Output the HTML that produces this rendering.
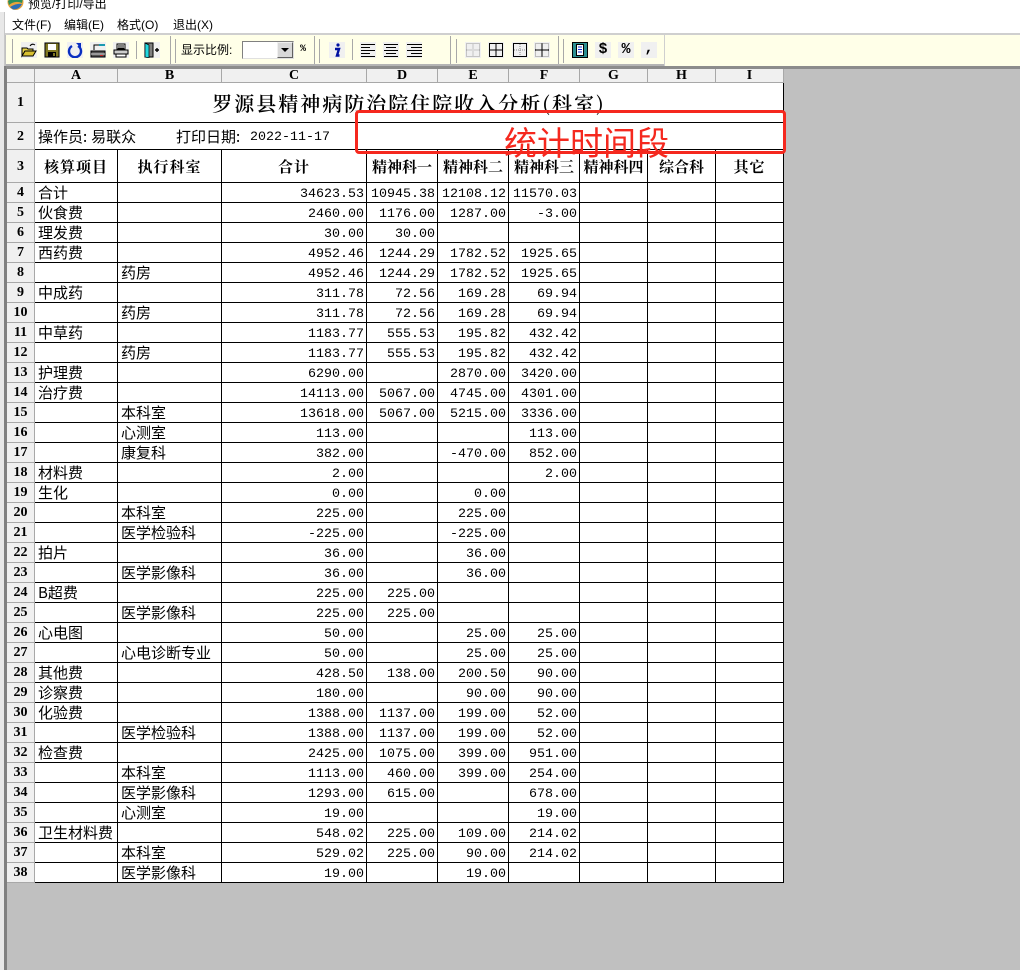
<!DOCTYPE html>
<html lang="zh"><head><meta charset="utf-8"><title>预览/打印/导出</title>
<style>
html,body{margin:0;padding:0;width:1020px;height:970px;overflow:hidden;background:#c0c0c0;position:relative;font-family:"Liberation Sans","WenQuanYi Zen Hei",sans-serif}
.a{position:absolute}
.top{left:0;top:0;width:1020px;height:33px;background:#fff}
.m{position:absolute;top:18px;font-size:12px;line-height:14px;color:#000;white-space:nowrap}
.tb{left:6px;top:35px;width:1014px;height:31px;background:#ffffe8}
.g{position:absolute;background:#a8a8a8;width:1px}
.i{position:absolute;top:42px;width:16px;height:16px;background:#f0f0f0}
.i svg{display:block}
table{position:absolute;left:7px;top:69px;width:777px;border-collapse:separate;border-spacing:0;table-layout:fixed;background:#fff;font-family:"WenQuanYi Zen Hei","Noto Sans CJK SC",sans-serif;font-size:15px;color:#000}
td{box-sizing:border-box;padding:0 0 0 3px;border-right:1px solid #000;border-bottom:1px solid #000;height:20px;line-height:19px;overflow:hidden;white-space:nowrap}
td.n{font-family:"Liberation Mono",monospace;font-size:13.33px;text-align:right;padding:4px 2px 0 0;line-height:15px}
td.r,td.c{background:#f0f0f0;font-family:"Liberation Serif","Noto Serif CJK SC",serif;font-weight:bold;text-align:center;padding:1px 0 0;line-height:18px;border-right:1px solid #a8a8a8;border-bottom:1px solid #a8a8a8;font-size:14px}
td.c{height:14px;line-height:13px;padding:0}
td.h{font-family:"Noto Serif CJK SC",serif;font-weight:bold;font-size:15px;text-align:center;padding:0;letter-spacing:1px}
.t2{position:absolute;top:129px;font-family:"WenQuanYi Zen Hei","Noto Sans CJK SC",sans-serif;font-size:15px;line-height:16px;white-space:nowrap}
</style></head>
<body>
<div class="a top"></div>
<div class="a" style="left:0;top:12px;width:4px;height:958px;background:#e8e8e8"></div>
<div class="a" style="left:4px;top:66px;width:3px;height:904px;background:#808080"></div>
<div class="a" style="left:4px;top:12px;width:1px;height:54px;background:#c8c8c8"></div>
<svg class="a" style="left:7px;top:-6px" width="17" height="16" viewBox="0 0 17 16"><circle cx="8.500" cy="8" r="8" fill="#e8a33c"/><path d="M1 7Q8 2 16 4L15 9Q8 6 2 11Z" fill="#2b8f5a"/><path d="M3 13Q10 9 15 10Q12 16 6 15.500Z" fill="#2d6fb5"/></svg>
<div class="a" style="left:28px;top:-3px;font-size:12px;line-height:14px;white-space:nowrap">预览/打印/导出</div>
<div class="m" style="left:12px">文件(F)</div>
<div class="m" style="left:64px">编辑(E)</div>
<div class="m" style="left:117px">格式(O)</div>
<div class="m" style="left:173px">退出(X)</div>

<div class="a" style="left:5px;top:33px;width:1015px;height:2px;background:#cfcfcf"></div>
<div class="a tb"></div>
<div class="a" style="left:6px;top:64px;width:658px;height:2px;background:#b4b4b4"></div>
<div class="a" style="left:6px;top:66px;width:1014px;height:3px;background:#8c8c8c"></div>
<div class="a" style="left:664px;top:35px;width:1px;height:31px;background:#cfcfcf"></div>

<div class="g" style="left:12px;top:39px;height:24px"></div>
<div class="g" style="left:136px;top:41px;height:18px"></div>
<div class="g" style="left:170px;top:36px;height:28px"></div>
<div class="g" style="left:175px;top:39px;height:24px"></div>
<div class="g" style="left:314px;top:36px;height:28px"></div>
<div class="g" style="left:319px;top:39px;height:24px"></div>
<div class="g" style="left:352px;top:39px;height:21px"></div>
<div class="g" style="left:450px;top:36px;height:28px"></div>
<div class="g" style="left:456px;top:39px;height:24px"></div>
<div class="g" style="left:558px;top:36px;height:28px"></div>
<div class="g" style="left:563px;top:39px;height:24px"></div>

<div class="i" style="left:21px"><svg width="16" height="16" viewBox="0 0 16 16"><path d="M1 6h5l1 1h5v2H4L1 14Z" fill="#e8d44a" stroke="#000"/><path d="M1 14L4 9h11l-3 5Z" fill="#d8c030" stroke="#000"/><path d="M9 4Q11 1 14 3" fill="none" stroke="#000"/></svg></div>
<div class="i" style="left:44px"><svg width="16" height="16" viewBox="0 0 16 16"><path d="M1 1h14v14H1Z" fill="#807820" stroke="#000"/><rect x="4" y="2" width="8" height="6" fill="#fff"/><rect x="4" y="10" width="8" height="5" fill="#000"/><rect x="9" y="11" width="2" height="3" fill="#807820"/></svg></div>
<div class="i" style="left:67px"><svg width="16" height="16" viewBox="0 0 16 16"><path d="M5 4A6 6 0 1 0 11 4" fill="none" stroke="#0a2fc0" stroke-width="2.400"/><path d="M9 1h5v5Z" fill="#0a2fc0"/></svg></div>
<div class="i" style="left:90px"><svg width="16" height="16" viewBox="0 0 16 16"><path d="M1 9h14v6H1Z" fill="#555" stroke="#000"/><path d="M1 12h14" stroke="#ddd"/><path d="M4 8V3h6" fill="none" stroke="#000"/><path d="M9 3h6" stroke="#1a9ab0" stroke-width="2"/><rect x="10" y="13" width="3" height="1" fill="#c22"/></svg></div>
<div class="i" style="left:113px"><svg width="16" height="16" viewBox="0 0 16 16"><path d="M4 2h8v5H4Z" fill="#fff" stroke="#000"/><path d="M1 8h14v4H1Z" fill="#ccc" stroke="#000"/><path d="M3 12h10v3H3Z" fill="#fff" stroke="#000"/><path d="M5 4h6M5 6h6" stroke="#000"/></svg></div>
<div class="i" style="left:144px"><svg width="16" height="16" viewBox="0 0 16 16"><path d="M1 1h8v14H1Z" fill="#808080" stroke="#000"/><path d="M1 1l4 2v13l-4-1Z" fill="#22d8e0" stroke="#000" stroke-width=".7"/><path d="M11 8h4M13 6v4" stroke="#000" stroke-width="1.400"/></svg></div>

<div class="a" style="left:181px;top:43px;font-size:12px;line-height:14px;white-space:nowrap">显示比例:</div>
<div class="a" style="left:242px;top:41px;width:52px;height:18px;box-sizing:border-box;background:#fff;border:1px solid;border-color:#808080 #e0e0e0 #e0e0e0 #808080"></div>
<div class="a" style="left:277px;top:42px;width:16px;height:16px;box-sizing:border-box;background:#d8d8d8;border:1px solid;border-color:#f0f0f0 #606060 #606060 #f0f0f0"></div>
<div class="a" style="left:281px;top:48px;width:0;height:0;border-left:4px solid transparent;border-right:4px solid transparent;border-top:4px solid #000"></div>
<div class="a" style="left:300px;top:44px;font-size:10px;line-height:12px;font-weight:bold;font-family:'Liberation Mono',monospace">%</div>

<div class="i" style="left:329px"><svg width="16" height="16" viewBox="0 0 16 16"><circle cx="9" cy="3" r="1.600" fill="#0010a0"/><path d="M6 7h4L8 13.500h2.500" fill="none" stroke="#0010a0" stroke-width="2.400"/></svg></div>
<div class="i" style="left:360px"><svg width="16" height="16" viewBox="0 0 16 16"><path d="M1 2.500h14M1 5.500h9M1 8.500h14M1 11.500h9M1 14.500h14" stroke="#000"/></svg></div>
<div class="i" style="left:383px"><svg width="16" height="16" viewBox="0 0 16 16"><path d="M1 2.500h14M3 5.500h10M1 8.500h14M3 11.500h10M1 14.500h14" stroke="#000"/></svg></div>
<div class="i" style="left:406px"><svg width="16" height="16" viewBox="0 0 16 16"><path d="M1 2.500h15M5 5.500h11M1 8.500h15M5 11.500h11M1 14.500h15" stroke="#000"/></svg></div>
<div class="i" style="left:465px"><svg width="16" height="16" viewBox="0 0 16 16"><path d="M1.500 1.500h13v13h-13ZM8 1.500v13M1.500 8h13" fill="none" stroke="#999" stroke-dasharray="1 1"/></svg></div>
<div class="i" style="left:488px"><svg width="16" height="16" viewBox="0 0 16 16"><path d="M1.500 1.500h13v13h-13ZM8 1.500v13M1.500 8h13" fill="none" stroke="#000"/></svg></div>
<div class="i" style="left:512px"><svg width="16" height="16" viewBox="0 0 16 16"><path d="M1.500 1.500h13v13h-13Z" fill="none" stroke="#000"/><path d="M8 2v12M2 8h12" stroke="#888" stroke-dasharray="1 1"/></svg></div>
<div class="i" style="left:534px"><svg width="16" height="16" viewBox="0 0 16 16"><path d="M1.500 1.500h13v13h-13Z" fill="none" stroke="#888" stroke-dasharray="1 1"/><path d="M8 1v14M1 8h14" stroke="#000"/></svg></div>
<div class="i" style="left:572px"><svg width="16" height="16" viewBox="0 0 16 16"><rect x=".5" y=".5" width="15" height="15" fill="#2a8f8f" stroke="#000"/><rect x="4.500" y="2.500" width="7" height="11" fill="#fff" stroke="#000"/><path d="M6 5h4M6 7.500h4M6 10h4" stroke="#1030d0"/></svg></div>
<div class="i" style="left:595px;font:bold 15px/16px 'Liberation Mono',monospace;text-align:center">$</div>
<div class="i" style="left:618px;font:bold 15px/16px 'Liberation Mono',monospace;text-align:center">%</div>
<div class="i" style="left:641px;font:bold 15px/14px 'Liberation Mono',monospace;text-align:center">,</div>

<table>
<colgroup><col style="width:28px"><col style="width:83px"><col style="width:104px"><col style="width:145px"><col style="width:71px"><col style="width:71px"><col style="width:71px"><col style="width:68px"><col style="width:68px"><col style="width:68px"></colgroup>
<tr><td class="c"></td><td class="c">A</td><td class="c">B</td><td class="c">C</td><td class="c">D</td><td class="c">E</td><td class="c">F</td><td class="c">G</td><td class="c">H</td><td class="c">I</td></tr>
<tr><td class="r" style="height:40px">1</td><td colspan="9" style="height:40px;padding:0;text-align:center;font-family:'Noto Serif CJK SC',serif;font-size:20px;font-weight:600;letter-spacing:2px;line-height:35px">罗源县精神病防治院住院收入分析(科室)</td></tr>
<tr><td class="r" style="height:27px;line-height:24px">2</td><td colspan="9" style="height:27px;padding:0"></td></tr>
<tr><td class="r" style="height:33px">3</td><td class="h" style="height:33px">核算项目</td><td class="h">执行科室</td><td class="h">合计</td><td class="h" style="letter-spacing:0">精神科一</td><td class="h" style="letter-spacing:0">精神科二</td><td class="h" style="letter-spacing:0">精神科三</td><td class="h" style="letter-spacing:0">精神科四</td><td class="h" style="letter-spacing:0">综合科</td><td class="h">其它</td></tr>
<tr><td class="r">4</td><td>合计</td><td></td><td class="n">34623.53</td><td class="n">10945.38</td><td class="n">12108.12</td><td class="n">11570.03</td><td></td><td></td><td></td></tr>
<tr><td class="r">5</td><td>伙食费</td><td></td><td class="n">2460.00</td><td class="n">1176.00</td><td class="n">1287.00</td><td class="n">-3.00</td><td></td><td></td><td></td></tr>
<tr><td class="r">6</td><td>理发费</td><td></td><td class="n">30.00</td><td class="n">30.00</td><td></td><td></td><td></td><td></td><td></td></tr>
<tr><td class="r">7</td><td>西药费</td><td></td><td class="n">4952.46</td><td class="n">1244.29</td><td class="n">1782.52</td><td class="n">1925.65</td><td></td><td></td><td></td></tr>
<tr><td class="r">8</td><td></td><td>药房</td><td class="n">4952.46</td><td class="n">1244.29</td><td class="n">1782.52</td><td class="n">1925.65</td><td></td><td></td><td></td></tr>
<tr><td class="r">9</td><td>中成药</td><td></td><td class="n">311.78</td><td class="n">72.56</td><td class="n">169.28</td><td class="n">69.94</td><td></td><td></td><td></td></tr>
<tr><td class="r">10</td><td></td><td>药房</td><td class="n">311.78</td><td class="n">72.56</td><td class="n">169.28</td><td class="n">69.94</td><td></td><td></td><td></td></tr>
<tr><td class="r">11</td><td>中草药</td><td></td><td class="n">1183.77</td><td class="n">555.53</td><td class="n">195.82</td><td class="n">432.42</td><td></td><td></td><td></td></tr>
<tr><td class="r">12</td><td></td><td>药房</td><td class="n">1183.77</td><td class="n">555.53</td><td class="n">195.82</td><td class="n">432.42</td><td></td><td></td><td></td></tr>
<tr><td class="r">13</td><td>护理费</td><td></td><td class="n">6290.00</td><td></td><td class="n">2870.00</td><td class="n">3420.00</td><td></td><td></td><td></td></tr>
<tr><td class="r">14</td><td>治疗费</td><td></td><td class="n">14113.00</td><td class="n">5067.00</td><td class="n">4745.00</td><td class="n">4301.00</td><td></td><td></td><td></td></tr>
<tr><td class="r">15</td><td></td><td>本科室</td><td class="n">13618.00</td><td class="n">5067.00</td><td class="n">5215.00</td><td class="n">3336.00</td><td></td><td></td><td></td></tr>
<tr><td class="r">16</td><td></td><td>心测室</td><td class="n">113.00</td><td></td><td></td><td class="n">113.00</td><td></td><td></td><td></td></tr>
<tr><td class="r">17</td><td></td><td>康复科</td><td class="n">382.00</td><td></td><td class="n">-470.00</td><td class="n">852.00</td><td></td><td></td><td></td></tr>
<tr><td class="r">18</td><td>材料费</td><td></td><td class="n">2.00</td><td></td><td></td><td class="n">2.00</td><td></td><td></td><td></td></tr>
<tr><td class="r">19</td><td>生化</td><td></td><td class="n">0.00</td><td></td><td class="n">0.00</td><td></td><td></td><td></td><td></td></tr>
<tr><td class="r">20</td><td></td><td>本科室</td><td class="n">225.00</td><td></td><td class="n">225.00</td><td></td><td></td><td></td><td></td></tr>
<tr><td class="r">21</td><td></td><td>医学检验科</td><td class="n">-225.00</td><td></td><td class="n">-225.00</td><td></td><td></td><td></td><td></td></tr>
<tr><td class="r">22</td><td>拍片</td><td></td><td class="n">36.00</td><td></td><td class="n">36.00</td><td></td><td></td><td></td><td></td></tr>
<tr><td class="r">23</td><td></td><td>医学影像科</td><td class="n">36.00</td><td></td><td class="n">36.00</td><td></td><td></td><td></td><td></td></tr>
<tr><td class="r">24</td><td>B超费</td><td></td><td class="n">225.00</td><td class="n">225.00</td><td></td><td></td><td></td><td></td><td></td></tr>
<tr><td class="r">25</td><td></td><td>医学影像科</td><td class="n">225.00</td><td class="n">225.00</td><td></td><td></td><td></td><td></td><td></td></tr>
<tr><td class="r">26</td><td>心电图</td><td></td><td class="n">50.00</td><td></td><td class="n">25.00</td><td class="n">25.00</td><td></td><td></td><td></td></tr>
<tr><td class="r">27</td><td></td><td>心电诊断专业</td><td class="n">50.00</td><td></td><td class="n">25.00</td><td class="n">25.00</td><td></td><td></td><td></td></tr>
<tr><td class="r">28</td><td>其他费</td><td></td><td class="n">428.50</td><td class="n">138.00</td><td class="n">200.50</td><td class="n">90.00</td><td></td><td></td><td></td></tr>
<tr><td class="r">29</td><td>诊察费</td><td></td><td class="n">180.00</td><td></td><td class="n">90.00</td><td class="n">90.00</td><td></td><td></td><td></td></tr>
<tr><td class="r">30</td><td>化验费</td><td></td><td class="n">1388.00</td><td class="n">1137.00</td><td class="n">199.00</td><td class="n">52.00</td><td></td><td></td><td></td></tr>
<tr><td class="r">31</td><td></td><td>医学检验科</td><td class="n">1388.00</td><td class="n">1137.00</td><td class="n">199.00</td><td class="n">52.00</td><td></td><td></td><td></td></tr>
<tr><td class="r">32</td><td>检查费</td><td></td><td class="n">2425.00</td><td class="n">1075.00</td><td class="n">399.00</td><td class="n">951.00</td><td></td><td></td><td></td></tr>
<tr><td class="r">33</td><td></td><td>本科室</td><td class="n">1113.00</td><td class="n">460.00</td><td class="n">399.00</td><td class="n">254.00</td><td></td><td></td><td></td></tr>
<tr><td class="r">34</td><td></td><td>医学影像科</td><td class="n">1293.00</td><td class="n">615.00</td><td></td><td class="n">678.00</td><td></td><td></td><td></td></tr>
<tr><td class="r">35</td><td></td><td>心测室</td><td class="n">19.00</td><td></td><td></td><td class="n">19.00</td><td></td><td></td><td></td></tr>
<tr><td class="r">36</td><td>卫生材料费</td><td></td><td class="n">548.02</td><td class="n">225.00</td><td class="n">109.00</td><td class="n">214.02</td><td></td><td></td><td></td></tr>
<tr><td class="r">37</td><td></td><td>本科室</td><td class="n">529.02</td><td class="n">225.00</td><td class="n">90.00</td><td class="n">214.02</td><td></td><td></td><td></td></tr>
<tr><td class="r">38</td><td></td><td>医学影像科</td><td class="n">19.00</td><td></td><td class="n">19.00</td><td></td><td></td><td></td><td></td></tr>
</table>

<div class="t2" style="left:38px">操作员:<span style="margin-left:4px">易联众</span></div>
<div class="t2" style="left:176px">打印日期:</div>
<div class="t2" style="left:250px;top:130px;font-family:'Liberation Mono',monospace;font-size:13.33px">2022-11-17</div>

<div class="a" style="left:355px;top:110px;width:431px;height:44px;box-sizing:border-box;border:3px solid #f5281e;border-radius:4px"></div>
<div class="a" style="left:504px;top:122px;font-size:33px;line-height:38px;color:#f5281e;white-space:nowrap;font-family:'Noto Sans CJK SC',sans-serif">统计时间段</div>
</body></html>
